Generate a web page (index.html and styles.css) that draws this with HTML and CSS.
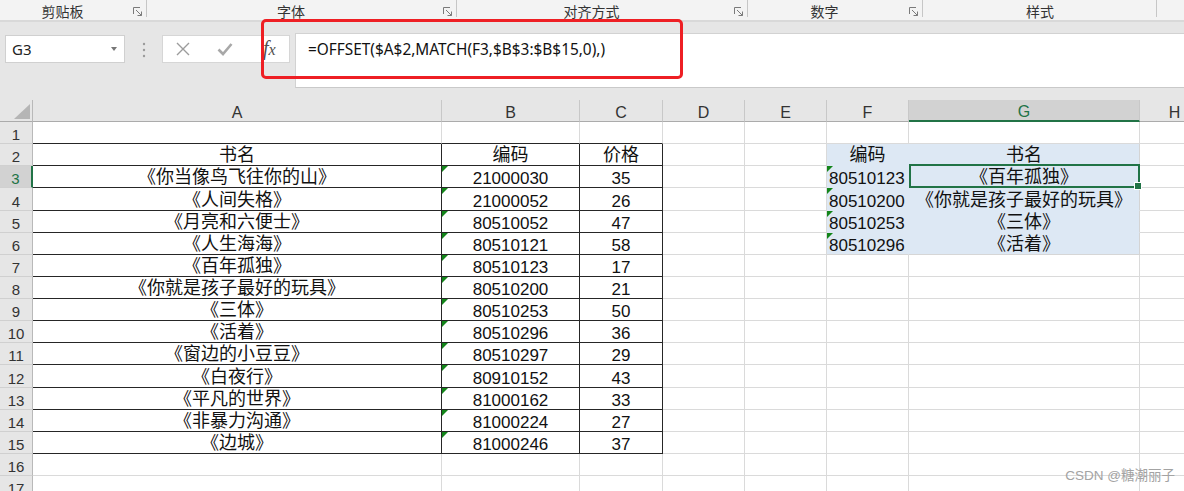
FILE: index.html
```html
<!DOCTYPE html>
<html lang="zh">
<head>
<meta charset="utf-8">
<title>Excel</title>
<link rel="stylesheet" href="styles.css">
</head>
<body>
<div class="ribbon">
  <div class="grp"><span class="lbl">剪贴板</span><svg class="launch" viewBox="0 0 10 10"><path d="M0.5 7V0.5H7" /><path d="M3 3L8.5 8.5M8.5 4.5V8.5H4.5" /></svg></div>
  <div class="grp g2"><span class="lbl">字体</span><svg class="launch" viewBox="0 0 10 10"><path d="M0.5 7V0.5H7" /><path d="M3 3L8.5 8.5M8.5 4.5V8.5H4.5" /></svg></div>
  <div class="grp g3"><span class="lbl">对齐方式</span><svg class="launch" viewBox="0 0 10 10"><path d="M0.5 7V0.5H7" /><path d="M3 3L8.5 8.5M8.5 4.5V8.5H4.5" /></svg></div>
  <div class="grp g4"><span class="lbl">数字</span><svg class="launch" viewBox="0 0 10 10"><path d="M0.5 7V0.5H7" /><path d="M3 3L8.5 8.5M8.5 4.5V8.5H4.5" /></svg></div>
  <div class="grp g5"><span class="lbl">样式</span></div>
</div>
<div class="fbar">
  <div class="namebox"><span>G3</span><span class="dd"></span></div>
  <div class="dots"><svg viewBox="0 0 4 16" width="4" height="16"><circle cx="2" cy="2" r="1.2"/><circle cx="2" cy="8" r="1.2"/><circle cx="2" cy="14" r="1.2"/></svg></div>
  <div class="btns">
    <svg class="ix" viewBox="0 0 14 14" width="14" height="14"><path d="M1 1L13 13M13 1L1 13"/></svg>
    <svg class="ic" viewBox="0 0 16 14" width="16" height="14"><path d="M1.5 7.5L6 12L14.5 2"/></svg>
    <span class="fx">f<span class="fxx">x</span></span>
  </div>
  <div class="finput">=OFFSET($A$2,MATCH(F3,$B$3:$B$15,0),)</div>
</div>
<div class="sheet">
  <div class="corner"></div><div class="ch">A</div><div class="ch">B</div><div class="ch">C</div><div class="ch">D</div><div class="ch">E</div><div class="ch">F</div><div class="ch selc">G</div><div class="ch">H</div>

  <div class="rh">1</div><div class="c tt"></div><div class="c tt"></div><div class="c tt"></div><div class="c"></div><div class="c"></div><div class="c"></div><div class="c"></div><div class="c"></div>

  <div class="rh">2</div><div class="c tb t">书名</div><div class="c tb t">编码</div><div class="c tb t">价格</div><div class="c"></div><div class="c"></div><div class="c bl t">编码</div><div class="c bl ge t">书名</div><div class="c"></div>

  <div class="rh selr">3</div><div class="c tb t">《你当像鸟飞往你的山》</div><div class="c tb nt">21000030</div><div class="c tb">35</div><div class="c"></div><div class="c"></div><div class="c bl nt left">80510123</div><div class="c bl ge t sel">《百年孤独》</div><div class="c"></div>

  <div class="rh">4</div><div class="c tb t">《人间失格》</div><div class="c tb nt">21000052</div><div class="c tb">26</div><div class="c"></div><div class="c"></div><div class="c bl nt left">80510200</div><div class="c bl ge t">《你就是孩子最好的玩具》</div><div class="c"></div>

  <div class="rh">5</div><div class="c tb t">《月亮和六便士》</div><div class="c tb nt">80510052</div><div class="c tb">47</div><div class="c"></div><div class="c"></div><div class="c bl nt left">80510253</div><div class="c bl ge t">《三体》</div><div class="c"></div>

  <div class="rh">6</div><div class="c tb t">《人生海海》</div><div class="c tb nt">80510121</div><div class="c tb">58</div><div class="c"></div><div class="c"></div><div class="c bl lb nt left">80510296</div><div class="c bl ge lb t">《活着》</div><div class="c"></div>

  <div class="rh">7</div><div class="c tb t">《百年孤独》</div><div class="c tb nt">80510123</div><div class="c tb">17</div><div class="c"></div><div class="c"></div><div class="c"></div><div class="c"></div><div class="c"></div>

  <div class="rh">8</div><div class="c tb t">《你就是孩子最好的玩具》</div><div class="c tb nt">80510200</div><div class="c tb">21</div><div class="c"></div><div class="c"></div><div class="c"></div><div class="c"></div><div class="c"></div>

  <div class="rh">9</div><div class="c tb t">《三体》</div><div class="c tb nt">80510253</div><div class="c tb">50</div><div class="c"></div><div class="c"></div><div class="c"></div><div class="c"></div><div class="c"></div>

  <div class="rh">10</div><div class="c tb t">《活着》</div><div class="c tb nt">80510296</div><div class="c tb">36</div><div class="c"></div><div class="c"></div><div class="c"></div><div class="c"></div><div class="c"></div>

  <div class="rh">11</div><div class="c tb t">《窗边的小豆豆》</div><div class="c tb nt">80510297</div><div class="c tb">29</div><div class="c"></div><div class="c"></div><div class="c"></div><div class="c"></div><div class="c"></div>

  <div class="rh">12</div><div class="c tb t">《白夜行》</div><div class="c tb nt">80910152</div><div class="c tb">43</div><div class="c"></div><div class="c"></div><div class="c"></div><div class="c"></div><div class="c"></div>

  <div class="rh">13</div><div class="c tb t">《平凡的世界》</div><div class="c tb nt">81000162</div><div class="c tb">33</div><div class="c"></div><div class="c"></div><div class="c"></div><div class="c"></div><div class="c"></div>

  <div class="rh">14</div><div class="c tb t">《非暴力沟通》</div><div class="c tb nt">81000224</div><div class="c tb">27</div><div class="c"></div><div class="c"></div><div class="c"></div><div class="c"></div><div class="c"></div>

  <div class="rh">15</div><div class="c tb t">《边城》</div><div class="c tb nt">81000246</div><div class="c tb">37</div><div class="c"></div><div class="c"></div><div class="c"></div><div class="c"></div><div class="c"></div>

  <div class="rh">16</div><div class="c"></div><div class="c"></div><div class="c"></div><div class="c"></div><div class="c"></div><div class="c"></div><div class="c"></div><div class="c"></div>

  <div class="rh">17</div><div class="c"></div><div class="c"></div><div class="c"></div><div class="c"></div><div class="c"></div><div class="c"></div><div class="c"></div><div class="c"></div>
</div>
<div class="redbox"></div>
<div class="wm">CSDN @糖潮丽子</div>
</body>
</html>
```

FILE: styles.css
```css
* { box-sizing: border-box; }
html, body { margin: 0; padding: 0; }
body {
  width: 1184px;
  height: 491px;
  overflow: hidden;
  position: relative;
  background: #fff;
  font-family: "Liberation Sans", "Noto Sans CJK SC", sans-serif;
  color: #111;
}

/* ribbon group labels */
.ribbon {
  height: 22px;
  background: #f3f3f3;
  border-bottom: 2px solid #d9d9d9;
  display: flex;
}
.grp {
  position: relative;
  width: 147px;
  height: 20px;
  display: flex;
  align-items: center;
  font: 14px/20px "Noto Sans CJK SC", sans-serif;
  color: #333;
}
.grp::after {
  content: "";
  position: absolute;
  right: 0;
  top: 0;
  height: 17px;
  border-right: 1px solid #c6c6c6;
}
.g2 { width: 310px; }
.g3 { width: 291px; }
.g4 { width: 175px; }
.g5 { width: 234px; }
.lbl { flex: 1; text-align: center; padding-top: 2px; }
.launch {
  width: 10px;
  height: 10px;
  margin: 4px 4px 0 8px;
  fill: none;
  stroke: #7a7a7a;
  stroke-width: 1;
}

/* formula bar */
.fbar {
  height: 78px;
  background: #e6e6e6;
  display: flex;
  align-items: flex-start;
}
.namebox {
  margin: 13px 0 0 5px;
  width: 120px;
  height: 28px;
  background: #fff;
  border: 1px solid #d0d0d0;
  display: flex;
  align-items: center;
  justify-content: space-between;
  padding: 0 7px 0 6px;
  font: 15px "Noto Sans", sans-serif;
  color: #222;
}
.dd {
  width: 0;
  height: 0;
  border-left: 3.5px solid transparent;
  border-right: 3.5px solid transparent;
  border-top: 4px solid #777;
}
.dots {
  width: 37px;
  padding-top: 20px;
  display: flex;
  justify-content: center;
  fill: #9a9a9a;
}
.btns {
  margin-top: 13px;
  width: 128px;
  height: 28px;
  background: #fff;
  border: 1px solid #d6d6d6;
  display: flex;
  align-items: center;
}
.ix {
  margin-left: 13px;
  fill: none;
  stroke: #9c9c9c;
  stroke-width: 1.4;
}
.ic {
  margin-left: 27px;
  fill: none;
  stroke: #a8a8a8;
  stroke-width: 2.6;
}
.fx {
  margin-left: 30px;
  font: italic 20px/20px "Liberation Serif", serif;
  color: #505050;
}
.fxx { font-size: 16px; }
.finput {
  margin: 11px 0 0 5px;
  flex: 1;
  height: 55px;
  background: #fff;
  border-top: 1px solid #d2d2d2;
  border-bottom: 1px solid #c9c9c9;
  border-left: 1px solid #d2d2d2;
  padding: 5px 0 0 12px;
  font: 15.4px/21px "Noto Sans", sans-serif;
  color: #111;
}

/* sheet grid */
.sheet {
  display: grid;
  grid-template-columns: 33px 409px 138px 83px 82px 82px 82px 231px 70px;
  grid-template-rows: 22px repeat(17, 22.13px);
}
.corner {
  position: relative;
  background: #e6e6e6;
  border-right: 1px solid #b9b9b9;
  border-bottom: 1px solid #ababab;
}
.corner::after {
  content: "";
  position: absolute;
  right: 2px;
  bottom: 2px;
  border-left: 16px solid transparent;
  border-bottom: 15px solid #b5b5b5;
}
.ch {
  background: #e6e6e6;
  border-right: 1px solid #c8c8c8;
  border-bottom: 1px solid #ababab;
  display: flex;
  justify-content: center;
  align-items: flex-end;
  font-size: 16px;
  line-height: 16px;
  color: #333;
}
.ch.selc {
  background: #d2d2d2;
  color: #217346;
  border-bottom: 2px solid #217346;
}
.rh {
  background: #e6e6e6;
  border-right: 1px solid #b9b9b9;
  border-bottom: 1px solid #d0d0d0;
  display: flex;
  justify-content: center;
  align-items: flex-end;
  font-size: 15px;
  line-height: 16px;
  color: #333;
}
.rh.selr {
  background: #d2d2d2;
  color: #217346;
  border-right: 2px solid #217346;
}
.c {
  position: relative;
  border-right: 1px solid #dadada;
  border-bottom: 1px solid #dadada;
  display: flex;
  justify-content: center;
  align-items: flex-end;
  white-space: nowrap;
  font-size: 17px;
  line-height: 16px;
  color: #111;
}
.c.t { font-size: 18px; line-height: 19px; }
.c.left { justify-content: flex-start; padding-left: 2px; }
.c.tt { border-bottom-color: #262626; }
.c.tb { border-right-color: #262626; border-bottom-color: #262626; }
.c.bl {
  background: #dde8f4;
  border-right-color: #dde8f4;
  border-bottom-color: #dde8f4;
}
.c.bl.ge { border-right-color: #d4d4d4; }
.c.bl.lb { border-bottom-color: #d6d6d6; }
.c.nt::before {
  content: "";
  position: absolute;
  left: 0;
  top: 0;
  border-top: 6px solid #13851a;
  border-right: 6px solid transparent;
}
.c.sel::after {
  content: "";
  position: absolute;
  left: 0;
  top: -2px;
  right: -1px;
  bottom: -1px;
  border: 2px solid #217346;
  z-index: 2;
}
.c.sel::before {
  content: "";
  position: absolute;
  right: -3px;
  bottom: -3px;
  width: 6px;
  height: 6px;
  background: #217346;
  border: 1px solid #fff;
  z-index: 3;
}

/* annotation overlay */
.redbox {
  position: absolute;
  left: 261px;
  top: 19px;
  width: 422px;
  height: 60px;
  border: 3.5px solid #ee1f24;
  border-radius: 5px;
}
.wm {
  position: absolute;
  right: 9px;
  bottom: 7px;
  font: 13.5px "Liberation Sans", "Noto Sans CJK SC", sans-serif;
  color: #a3a3a3;
}
```
